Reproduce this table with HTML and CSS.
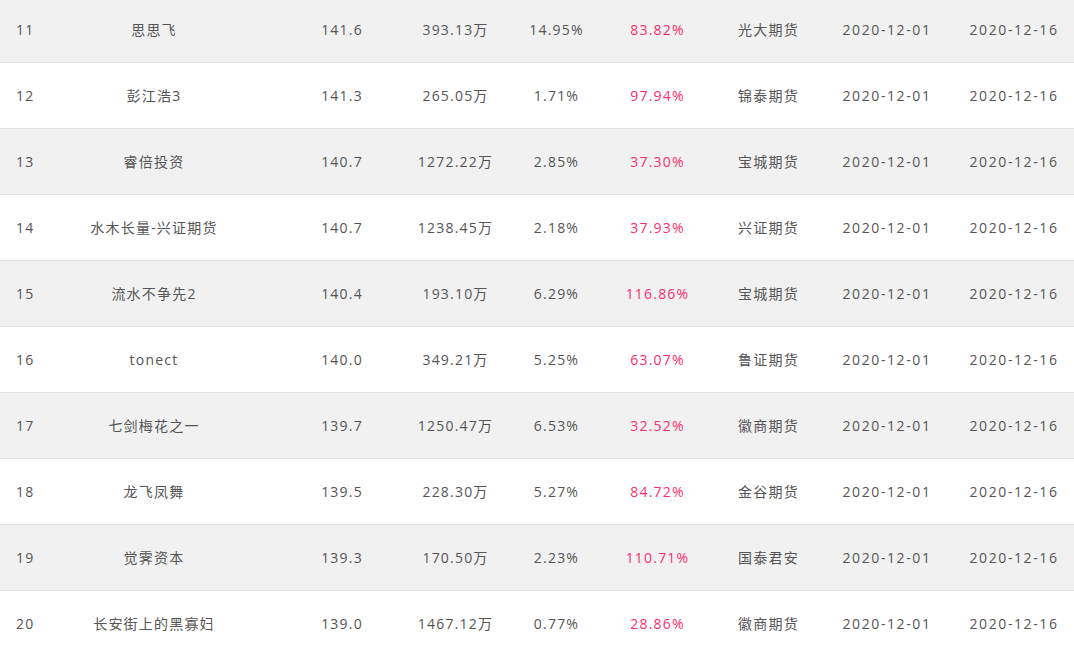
FILE: index.html
```html
<!DOCTYPE html>
<html lang="zh-CN">
<head>
<meta charset="utf-8">
<title>排行榜</title>
<link rel="stylesheet" href="styles.css">
</head>
<body>
<div class="table">
  <div class="row odd"><div class="c rank">11</div><div class="c name">思思飞</div><div class="c score">141.6</div><div class="c amount">393.13万</div><div class="c pct">14.95%</div><div class="c ret">83.82%</div><div class="c broker">光大期货</div><div class="c d1">2020-12-01</div><div class="c d2">2020-12-16</div></div>
  <div class="row"><div class="c rank">12</div><div class="c name">彭江浩3</div><div class="c score">141.3</div><div class="c amount">265.05万</div><div class="c pct">1.71%</div><div class="c ret">97.94%</div><div class="c broker">锦泰期货</div><div class="c d1">2020-12-01</div><div class="c d2">2020-12-16</div></div>
  <div class="row odd"><div class="c rank">13</div><div class="c name">睿倍投资</div><div class="c score">140.7</div><div class="c amount">1272.22万</div><div class="c pct">2.85%</div><div class="c ret">37.30%</div><div class="c broker">宝城期货</div><div class="c d1">2020-12-01</div><div class="c d2">2020-12-16</div></div>
  <div class="row"><div class="c rank">14</div><div class="c name">水木长量-兴证期货</div><div class="c score">140.7</div><div class="c amount">1238.45万</div><div class="c pct">2.18%</div><div class="c ret">37.93%</div><div class="c broker">兴证期货</div><div class="c d1">2020-12-01</div><div class="c d2">2020-12-16</div></div>
  <div class="row odd"><div class="c rank">15</div><div class="c name">流水不争先2</div><div class="c score">140.4</div><div class="c amount">193.10万</div><div class="c pct">6.29%</div><div class="c ret">116.86%</div><div class="c broker">宝城期货</div><div class="c d1">2020-12-01</div><div class="c d2">2020-12-16</div></div>
  <div class="row"><div class="c rank">16</div><div class="c name">tonect</div><div class="c score">140.0</div><div class="c amount">349.21万</div><div class="c pct">5.25%</div><div class="c ret">63.07%</div><div class="c broker">鲁证期货</div><div class="c d1">2020-12-01</div><div class="c d2">2020-12-16</div></div>
  <div class="row odd"><div class="c rank">17</div><div class="c name">七剑梅花之一</div><div class="c score">139.7</div><div class="c amount">1250.47万</div><div class="c pct">6.53%</div><div class="c ret">32.52%</div><div class="c broker">徽商期货</div><div class="c d1">2020-12-01</div><div class="c d2">2020-12-16</div></div>
  <div class="row"><div class="c rank">18</div><div class="c name">龙飞凤舞</div><div class="c score">139.5</div><div class="c amount">228.30万</div><div class="c pct">5.27%</div><div class="c ret">84.72%</div><div class="c broker">金谷期货</div><div class="c d1">2020-12-01</div><div class="c d2">2020-12-16</div></div>
  <div class="row odd"><div class="c rank">19</div><div class="c name">觉霁资本</div><div class="c score">139.3</div><div class="c amount">170.50万</div><div class="c pct">2.23%</div><div class="c ret">110.71%</div><div class="c broker">国泰君安</div><div class="c d1">2020-12-01</div><div class="c d2">2020-12-16</div></div>
  <div class="row"><div class="c rank">20</div><div class="c name">长安街上的黑寡妇</div><div class="c score">139.0</div><div class="c amount">1467.12万</div><div class="c pct">0.77%</div><div class="c ret">28.86%</div><div class="c broker">徽商期货</div><div class="c d1">2020-12-01</div><div class="c d2">2020-12-16</div></div>
</div>
</body>
</html>
```

FILE: styles.css
```css
html, body {
  margin: 0;
  padding: 0;
  background: #ffffff;
}
body {
  font-family: "Open Sans", "Noto Sans CJK SC", sans-serif;
  font-size: 14px;
  color: #555555;
  letter-spacing: 1.2px;
  overflow: hidden;
}
.table {
  margin-top: -3px;
  width: 1074px;
}
.row {
  box-sizing: border-box;
  display: grid;
  grid-template-columns: 80px 168px 151px 107px 101px 106px 115px 122px 124px;
  height: 66px;
  padding-bottom: 1px;
  align-items: center;
  border-bottom: 1px solid #e3e3e8;
  background: #ffffff;
}
.row.odd {
  background: #f1f1f1;
}
.c {
  text-align: center;
  white-space: nowrap;
}
.rank {
  text-align: left;
  padding-left: 16px;
}
.name { padding-right: 20px; }
.score { padding-left: 37px; }
.amount { padding-left: 6px; }
.ret { color: #f8306f; padding-right: 5px; }
.broker { padding-right: 4px; }
.d1, .d2 { letter-spacing: 1.6px; }
.d1 { padding-right: 4px; }
.d2 { padding-left: 4px; }
```
